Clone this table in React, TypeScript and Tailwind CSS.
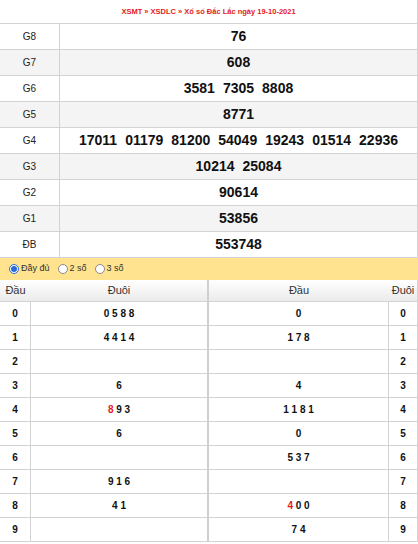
import React from "react";

const prizes = [
  { label: "G8", nums: ["76"] },
  { label: "G7", nums: ["608"] },
  { label: "G6", nums: ["3581", "7305", "8808"] },
  { label: "G5", nums: ["8771"] },
  { label: "G4", nums: ["17011", "01179", "81200", "54049", "19243", "01514", "22936"] },
  { label: "G3", nums: ["10214", "25084"] },
  { label: "G2", nums: ["90614"] },
  { label: "G1", nums: ["53856"] },
  { label: "ĐB", nums: ["553748"] },
];

// loto rows: left = duoi of dau i, right = dau of duoi i
const loto: { left: string[]; right: string[]; redL?: number; redR?: number }[] = [
  { left: ["0", "5", "8", "8"], right: ["0"] },
  { left: ["4", "4", "1", "4"], right: ["1", "7", "8"] },
  { left: [], right: [] },
  { left: ["6"], right: ["4"] },
  { left: ["8", "9", "3"], right: ["1", "1", "8", "1"], redL: 0 },
  { left: ["6"], right: ["0"] },
  { left: [], right: ["5", "3", "7"] },
  { left: ["9", "1", "6"], right: [] },
  { left: ["4", "1"], right: ["4", "0", "0"], redR: 0 },
  { left: [], right: ["7", "4"] },
];

const Digits = ({ list, red }: { list: string[]; red?: number }) => (
  <span>
    {list.map((d, i) => (
      <span key={i} className={i === red ? "text-[#e41b1b]" : ""}>
        {d}
        {i < list.length - 1 ? " " : ""}
      </span>
    ))}
  </span>
);

const Radio = ({ checked, label }: { checked?: boolean; label: string }) => (
  <div className="flex items-center gap-[2px]">
    <span
      className={
        "w-[10px] h-[10px] rounded-full border flex items-center justify-center bg-white " +
        (checked ? "border-[#2a6ad8]" : "border-[#8a8a8a]")
      }
    >
      {checked && <span className="w-[6px] h-[6px] rounded-full bg-[#2a6ad8]" />}
    </span>
    <span className="text-[9px] text-[#333]">{label}</span>
  </div>
);

export default function App() {
  return (
    <div className="w-[418px] h-[544px] bg-white overflow-hidden font-['Liberation_Sans',Arial,sans-serif] text-[#222]">
      {/* result table */}
      <div className="border-r border-[#d3d3d3]">
        <div className="h-[24px] border-b border-[#d3d3d3] flex items-center justify-center">
          <span className="text-[7.5px] font-bold text-[#e41b1b]">
            XSMT » XSDLC » Xổ số Đắc Lắc ngày 19-10-2021
          </span>
        </div>
        {prizes.map((p, i) => (
          <div
            key={p.label}
            className={
              "h-[26px] flex border-b border-[#d3d3d3] " + (i % 2 === 1 ? "bg-[#f4f4f4]" : "bg-white")
            }
          >
            <div className="w-[60px] border-r border-[#d3d3d3] flex items-center justify-center text-[10px]">
              {p.label}
            </div>
            <div className="flex-1 flex items-center justify-center gap-[8px] text-[14px] font-bold text-[#111]">
              {p.nums.map((n, j) => (
                <span key={j}>{n}</span>
              ))}
            </div>
          </div>
        ))}
      </div>

      {/* options bar */}
      <div className="h-[22px] bg-[#ffe38f] flex items-center pl-[9px] gap-[8px]">
        <Radio checked label="Đầy đủ" />
        <Radio label="2 số" />
        <Radio label="3 số" />
      </div>

      {/* loto tables */}
      <div className="flex">
        <div className="w-[209px] border-r-2 border-[#cfcfcf]">
          <div className="h-[22px] flex border-b border-[#d3d3d3] bg-gradient-to-b from-white to-[#ebebeb] text-[11px] text-[#333]">
            <div className="w-[31px] flex items-center justify-center">Đầu</div>
            <div className="flex-1 flex items-center justify-center">Đuôi</div>
          </div>
          {loto.map((r, i) => (
            <div key={i} className="h-[24px] flex border-b border-[#d3d3d3] text-[10px] font-bold text-[#111]">
              <div className="w-[31px] border-r border-[#d3d3d3] flex items-center justify-center">{i}</div>
              <div className="flex-1 flex items-center justify-center">
                <Digits list={r.left} red={r.redL} />
              </div>
            </div>
          ))}
        </div>
        <div className="flex-1 border-r border-[#d3d3d3]">
          <div className="h-[22px] flex border-b border-[#d3d3d3] bg-gradient-to-b from-white to-[#ebebeb] text-[11px] text-[#333]">
            <div className="flex-1 flex items-center justify-center">Đầu</div>
            <div className="w-[28px] flex items-center justify-center">Đuôi</div>
          </div>
          {loto.map((r, i) => (
            <div key={i} className="h-[24px] flex border-b border-[#d3d3d3] text-[10px] font-bold text-[#111]">
              <div className="flex-1 border-r border-[#d3d3d3] flex items-center justify-center">
                <Digits list={r.right} red={r.redR} />
              </div>
              <div className="w-[28px] flex items-center justify-center">{i}</div>
            </div>
          ))}
        </div>
      </div>
    </div>
  );
}
